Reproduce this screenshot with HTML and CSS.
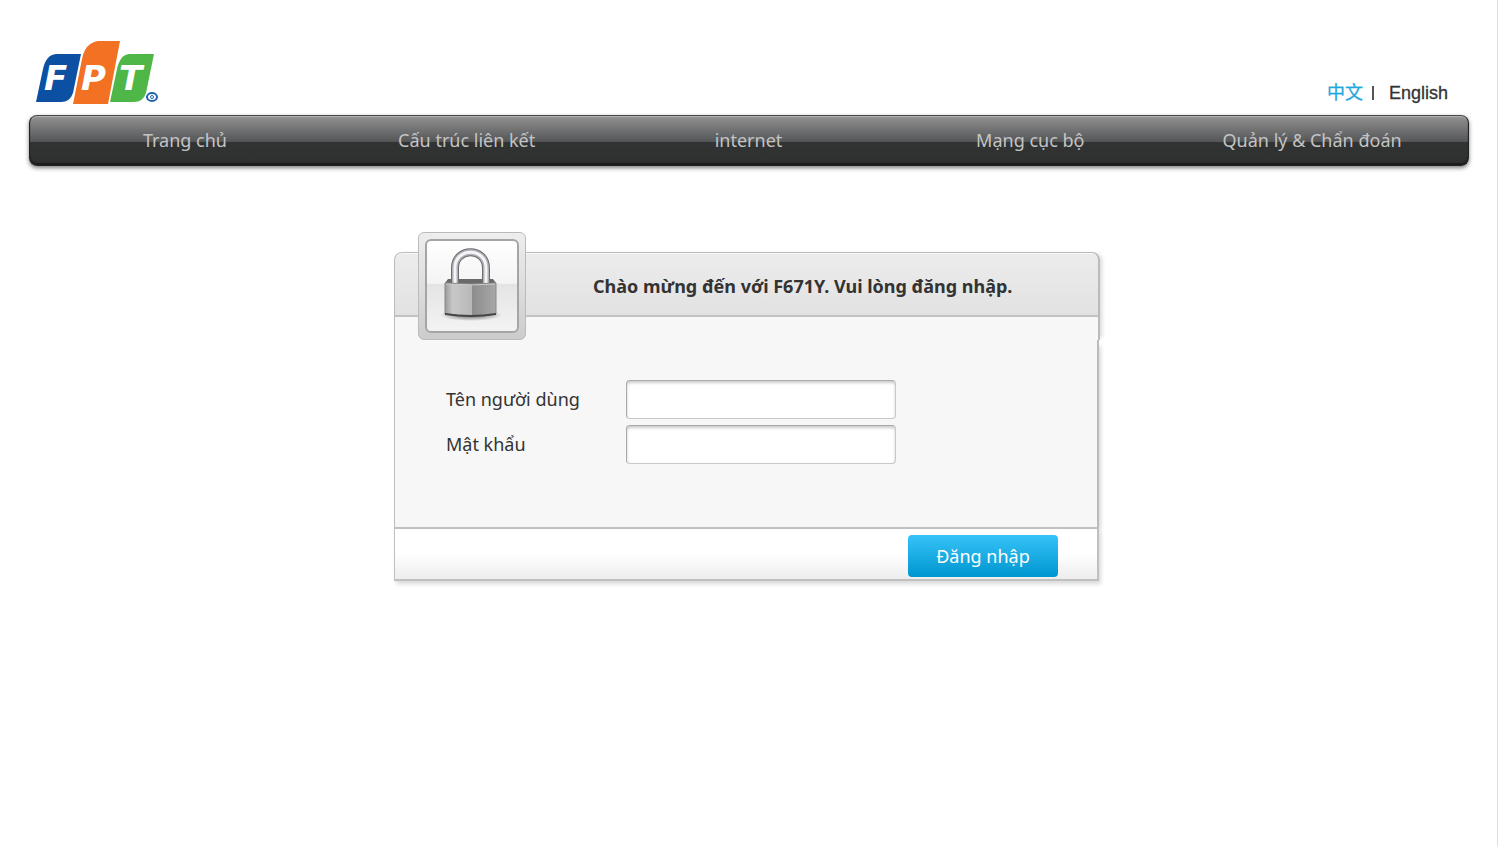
FILE: index.html
```html
<!DOCTYPE html>
<html lang="vi">
<head>
    <meta charset="UTF-8">
    <meta name="viewport" content="width=device-width, initial-scale=1.0">
    <title>F671Y</title>
    <link rel="stylesheet" href="styles.css">
</head>
<body>
    <header class="header">
        <svg class="logo" width="124" height="64" viewBox="0 0 124 64" role="img" aria-label="FPT">
            <path fill="#0b50a2" d="M20 13H45L37 52Q34 61 25 61H0L7 28Q10 14 20 13Z"/>
            <path fill="#f37123" d="M62 0H84L72 63H37L46 18Q49 2 62 0Z"/>
            <path fill="#4fb748" d="M93 13H118L110 52Q107 61 98 61H74L81 28Q84 14 93 13Z"/>
            <text class="logo-letter" x="8" y="49">F</text>
            <text class="logo-letter" x="45" y="49">P</text>
            <text class="logo-letter" x="83" y="49">T</text>
            <ellipse cx="116" cy="56" rx="5" ry="4" fill="#fff" stroke="#1f62ae" stroke-width="2"/>
            <circle cx="116" cy="56" r="1.5" fill="#fff" stroke="#1f62ae"/>
        </svg>
        <div class="languages">
            <a class="lang-zh" href="#" lang="zh">中文</a>
            <span class="divider"></span>
            <a href="#" lang="en">English</a>
        </div>
    </header>

    <nav class="nav">
        <a href="#">Trang chủ</a>
        <a href="#">Cấu trúc liên kết</a>
        <a href="#">internet</a>
        <a href="#">Mạng cục bộ</a>
        <a href="#">Quản lý &amp; Chẩn đoán</a>
    </nav>

    <form class="login">
        <div class="login-top">
            <h1 class="login-title">Chào mừng đến với F671Y. Vui lòng đăng nhập.</h1>
            <div class="lock">
                <svg viewBox="0 0 90 90" aria-hidden="true">
                    <defs>
                        <linearGradient id="steel" x1="0" x2="1" y1="0" y2="0">
                            <stop offset="0" stop-color="#9a9a9a"/>
                            <stop offset="0.15" stop-color="#c8c8c8"/>
                            <stop offset="0.52" stop-color="#b8b8b8"/>
                            <stop offset="0.53" stop-color="#8c8c8c"/>
                            <stop offset="1" stop-color="#a8a8a8"/>
                        </linearGradient>
                        <radialGradient id="shade">
                            <stop offset="0" stop-color="#000" stop-opacity="0.6"/>
                            <stop offset="1" stop-color="#000" stop-opacity="0"/>
                        </radialGradient>
                    </defs>
                    <ellipse cx="44" cy="74" rx="31" ry="6" fill="url(#shade)"/>
                    <path d="M18 42L21 38H66L69 42V46H18Z" fill="#6a6a6a"/>
                    <path d="M28 42V27C28 6 59 6 59 27V42" fill="none" stroke="#6b6b70" stroke-width="8"/>
                    <path d="M28 42V27C28 6 59 6 59 27V42" fill="none" stroke="#b0b0b6" stroke-width="6"/>
                    <path d="M28 42V27C28 6 59 6 59 27V42" fill="none" stroke="#f4f4f6" stroke-width="3"/>
                    <path d="M18 42Q44 44 69 42V73Q44 77 18 73Z" fill="url(#steel)" stroke="#888"/>
                    <path d="M19 43Q44 45 68 43" fill="none" stroke="#ccc"/>
                    <path d="M18 72Q44 76 69 72V74Q44 78 18 74Z" fill="#444"/>
                </svg>
            </div>
        </div>
        <div class="login-fields">
            <div class="field">
                <label for="username">Tên người dùng</label>
                <input type="text" id="username" name="username">
            </div>
            <div class="field">
                <label for="password">Mật khẩu</label>
                <input type="password" id="password" name="password">
            </div>
        </div>
        <div class="login-footer">
            <button type="submit">Đăng nhập</button>
        </div>
    </form>
</body>
</html>
```
FILE: styles.css
```css
* {
    box-sizing: border-box;
}

body {
    margin: 0;
    min-height: 100vh;
    padding: 0 28px 0 29px;
    border-right: 1px solid #e0e0e0;
    background-color: #fff;
    color: #333;
    font-family: "Noto Sans", sans-serif;
    font-size: 18px;
    line-height: 24px;
}

a {
    color: inherit;
    text-decoration: none;
}

.header {
    display: flex;
    justify-content: space-between;
    align-items: flex-end;
    padding: 41px 21px 10px 7px;
}

.logo {
    display: block;
}

.logo-letter {
    fill: #fff;
    font-family: "DejaVu Sans", sans-serif;
    font-size: 34px;
    font-weight: bold;
    font-style: italic;
}

.languages {
    display: flex;
    align-items: center;
    font-family: "Liberation Sans", Arial, "Noto Sans CJK SC", sans-serif;
    -webkit-text-stroke: 0.3px;
}

.lang-zh {
    color: #1fa8dc;
}

.divider {
    width: 2px;
    height: 14px;
    margin: 0 15px 0 9px;
    background-color: #555;
}

.nav {
    display: grid;
    grid-template-columns: repeat(5, 1fr);
    padding: 0 15px 0 14px;
    border: 1px solid #222;
    border-top-color: #484848;
    border-radius: 8px;
    background: linear-gradient(#929292, #555658 52%, #323433 53%, #2e3030);
    box-shadow: inset 0 2px 1px -1px #b5b5b5, inset 0 -2px 1px #1c1c1c, 0 2px 4px rgba(0, 0, 0, 0.5);
}

.nav a {
    padding: 12px 0 13px;
    color: #c4c4c4;
    text-align: center;
}

.login {
    width: 710px;
    max-width: 100%;
    margin: 86px auto 0;
    padding-right: 5px;
}

.login-top {
    position: relative;
    height: 88px;
    margin-right: -1px;
    border: 1px solid #bbb;
    border-width: 1px 2px 0 1px;
    border-radius: 8px 8px 0 0;
    background: linear-gradient(#ececec, #e2e2e2 62px, #c2c2c2 62px, #c2c2c2 64px, #f7f7f7 64px);
    box-shadow: inset 0 1px 0 #f8f8f8, 4px 0 4px -2px rgba(0, 0, 0, 0.15);
}

.login-title {
    margin: 0;
    padding: 21px 0 0 198px;
    font-size: 18px;
    line-height: 24px;
}

.lock {
    position: absolute;
    top: -21px;
    left: 23px;
    width: 108px;
    height: 108px;
    padding: 6px;
    border: 1px solid #bbb;
    border-radius: 6px;
    background: linear-gradient(#eee, #ccc);
}

.lock svg {
    display: block;
    width: 94px;
    height: 94px;
    border: 2px solid #a5a5a5;
    border-radius: 6px;
    background: linear-gradient(#fff, #f4f4f4 47%, #e4e4e4 48%, #f3f3f3);
}

.login-fields {
    position: relative;
    display: grid;
    gap: 6px;
    padding: 40px 51px 63px;
    border: 1px solid #bbb;
    border-width: 0 2px 0 1px;
    background-color: #f7f7f7;
    box-shadow: 4px 4px 4px -2px rgba(0, 0, 0, 0.15);
}

.field {
    display: flex;
    align-items: center;
}

.field label {
    width: 180px;
    padding-bottom: 2px;
}

.field input {
    width: 270px;
    height: 39px;
    padding: 0 8px;
    border: 1px solid #aaa;
    border-right-color: #c8c8c8;
    border-bottom-color: #c8c8c8;
    border-radius: 4px;
    background-color: #fff;
    box-shadow: inset 0 2px 3px #ccc;
    font: inherit;
}

.login-footer {
    position: relative;
    display: flex;
    justify-content: flex-end;
    padding: 6px 39px 2px;
    border: 2px solid #c0c0c0;
    border-left-width: 1px;
    background: linear-gradient(#fff 50%, #ededed);
    box-shadow: 2px 3px 4px rgba(0, 0, 0, 0.15);
}

.login-footer button {
    width: 150px;
    height: 42px;
    border: 0;
    border-radius: 4px;
    background: linear-gradient(#36c3f8, #0096cf);
    color: #fff;
    font: inherit;
}
```
